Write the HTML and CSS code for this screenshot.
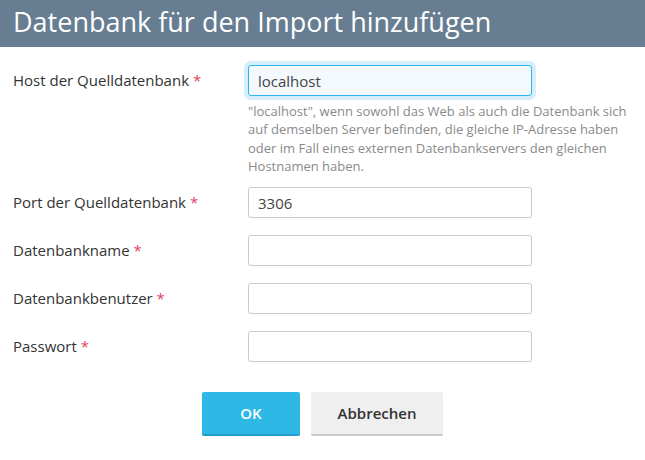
FILE: index.html
```html
<!DOCTYPE html>
<html lang="de">
<head>
<meta charset="utf-8">
<title>Datenbank für den Import hinzufügen</title>
<link rel="stylesheet" href="styles.css">
</head>
<body>
<div class="dialog">
  <div class="dialog-header">
    <h1 class="dialog-title">Datenbank für den Import hinzufügen</h1>
  </div>
  <form class="dialog-form">
    <div class="form-row has-help">
      <label class="form-label">Host der Quelldatenbank <span class="req">*</span></label>
      <div class="form-field">
        <input class="text-input is-focused" type="text" value="localhost">
        <p class="help">"localhost", wenn sowohl das Web als auch die Datenbank sich auf demselben Server befinden, die gleiche IP-Adresse haben oder im Fall eines externen Datenbankservers den gleichen Hostnamen haben.</p>
      </div>
    </div>
    <div class="form-row">
      <label class="form-label">Port der Quelldatenbank <span class="req">*</span></label>
      <div class="form-field">
        <input class="text-input" type="text" value="3306">
      </div>
    </div>
    <div class="form-row">
      <label class="form-label">Datenbankname <span class="req">*</span></label>
      <div class="form-field">
        <input class="text-input" type="text" value="">
      </div>
    </div>
    <div class="form-row">
      <label class="form-label">Datenbankbenutzer <span class="req">*</span></label>
      <div class="form-field">
        <input class="text-input" type="text" value="">
      </div>
    </div>
    <div class="form-row">
      <label class="form-label">Passwort <span class="req">*</span></label>
      <div class="form-field">
        <input class="text-input" type="password" value="">
      </div>
    </div>
    <div class="form-actions">
      <button type="button" class="btn btn-primary">OK</button>
      <button type="button" class="btn btn-secondary">Abbrechen</button>
    </div>
  </form>
</div>
</body>
</html>
```
FILE: styles.css
```css
html, body {
  margin: 0;
  padding: 0;
  background: #ffffff;
}
body {
  font-family: "Open Sans", "Liberation Sans", sans-serif;
  color: #333333;
}
.dialog {
  width: 645px;
}
.dialog-header {
  background: #667d92;
  height: 47px;
  padding: 0 13px;
  box-sizing: border-box;
}
.dialog-title {
  margin: 0;
  font-size: 27px;
  font-weight: 400;
  color: #ffffff;
  line-height: 43px;
  white-space: nowrap;
}
.dialog-form {
  padding: 18px 0 0 13px;
  display: flex;
  flex-direction: column;
}
.form-row {
  display: flex;
  align-items: flex-start;
  padding-bottom: 17px;
}
.form-row.has-help {
  padding-bottom: 12px;
}
.form-label {
  width: 235px;
  flex: none;
  font-size: 15px;
  line-height: 31px;
  color: #333333;
}
.req {
  color: #e2445f;
}
.form-field {
  width: 284px;
}
.text-input {
  display: block;
  box-sizing: border-box;
  width: 284px;
  height: 31px;
  margin: 0;
  padding: 0 9px;
  border: 1px solid #c9c9c9;
  border-radius: 3px;
  background: #ffffff;
  font-family: "Open Sans", "Liberation Sans", sans-serif;
  font-size: 15px;
  color: #444444;
  outline: none;
}
.text-input.is-focused {
  border-color: #2ab6e8;
  background: #f3f9fd;
  box-shadow: 0 0 0 4px #d6edfb;
}
.help {
  width: 385px;
  margin: 6px 0 0;
  font-size: 13px;
  line-height: 18.3px;
  color: #8a8a8a;
}
.form-actions {
  display: flex;
  justify-content: center;
  gap: 11px;
  margin-top: 13px;
  padding-right: 13px;
}
.btn {
  height: 44px;
  border: none;
  border-radius: 2px;
  font-family: "Open Sans", "Liberation Sans", sans-serif;
  font-size: 15px;
  font-weight: 600;
  cursor: pointer;
  padding: 0;
}
.btn-primary {
  width: 98px;
  background: #2eb8e6;
  border-bottom: 2px solid #229bc6;
  color: #ffffff;
}
.btn-secondary {
  width: 132px;
  background: #efefef;
  border-bottom: 2px solid #c9c9c9;
  color: #333333;
}
```
